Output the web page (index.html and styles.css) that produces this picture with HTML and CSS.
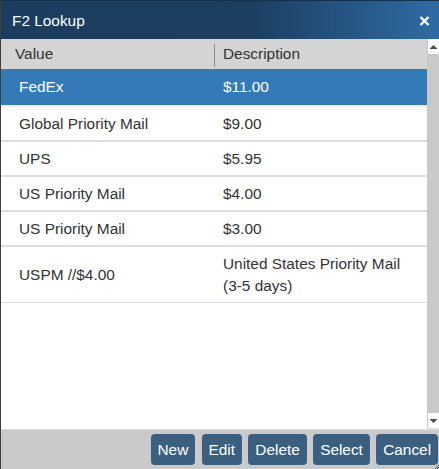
FILE: index.html
```html
<!DOCTYPE html>
<html>
<head>
<meta charset="utf-8">
<link rel="stylesheet" href="styles.css">
</head>
<body>
<div class="dialog">
  <div class="titlebar">
    <span class="title">F2 Lookup</span>
    <svg class="close" width="11" height="10" viewBox="0 0 11 10"><path d="M1.5 1 L9.5 9 M9.5 1 L1.5 9" stroke="#fff" stroke-width="2.4" stroke-linecap="butt"/></svg>
  </div>
  <div class="body">
    <div class="grid">
      <div class="head">
        <div class="hcell hval">Value</div>
        <div class="hsep"></div>
        <div class="hcell hdesc">Description</div>
      </div>
      <div class="row selected"><div class="cval">FedEx</div><div class="cdesc">$11.00</div></div>
      <div class="row"><div class="cval">Global Priority Mail</div><div class="cdesc">$9.00</div></div>
      <div class="row"><div class="cval">UPS</div><div class="cdesc">$5.95</div></div>
      <div class="row"><div class="cval">US Priority Mail</div><div class="cdesc">$4.00</div></div>
      <div class="row"><div class="cval">US Priority Mail</div><div class="cdesc">$3.00</div></div>
      <div class="row last"><div class="cval">USPM //$4.00</div><div class="cdesc">United States Priority Mail (3-5 days)</div></div>
    </div>
    <div class="scrollbar">
      <div class="sbtn"><svg width="9" height="6" viewBox="0 0 9 6"><path d="M0.5 5 L4.5 1 L8.5 5 Z" fill="#4a4a4a"/></svg></div>
      <div class="strack"></div>
      <div class="sbtn"><svg width="9" height="6" viewBox="0 0 9 6"><path d="M0.5 1 L4.5 5 L8.5 1 Z" fill="#4a4a4a"/></svg></div>
    </div>
  </div>
  <div class="footer">
    <button class="btn">New</button>
    <button class="btn">Edit</button>
    <button class="btn">Delete</button>
    <button class="btn">Select</button>
    <button class="btn">Cancel</button>
    <svg class="grip" width="5" height="5" viewBox="0 0 5 5"><path d="M5 1 L1 5 M5 3 L3 5" stroke="#555" stroke-width="1"/></svg>
  </div>
</div>
</body>
</html>
```

FILE: styles.css
```css
html, body {
  margin: 0;
  padding: 0;
  background: #ffffff;
}
body {
  font-family: "Liberation Sans", Arial, sans-serif;
  font-size: 15.4px;
  color: #333333;
}
.dialog {
  width: 438px;
  height: 469px;
  border-left: 1px solid #3d3d3d;
  display: flex;
  flex-direction: column;
  overflow: hidden;
  position: relative;
}
.titlebar {
  height: 38px;
  border-top: 1px solid #17304a;
  background: linear-gradient(90deg, #1b3e60 0%, #1c3f61 58%, #2f6ba4 100%);
  display: flex;
  align-items: center;
  justify-content: space-between;
  padding: 0 9px 0 11px;
  color: #ffffff;
}
.title {
  font-size: 15.4px;
  padding-top: 1px;
}
.close {
  display: block;
  margin-top: 1px;
}
.body {
  flex: 1;
  display: flex;
  min-height: 0;
}
.grid {
  flex: 1;
  display: flex;
  flex-direction: column;
  background: #ffffff;
}
.head {
  height: 30px;
  background: #d4d4d4;
  display: flex;
  align-items: center;
  color: #333333;
}
.hval {
  width: 199px;
  padding-left: 14px;
}
.hsep {
  width: 1px;
  height: 23px;
  background: #8a8a8a;
  margin-top: 2px;
}
.hdesc {
  padding-left: 8px;
}
.row {
  display: grid;
  grid-template-columns: 214px 1fr;
  align-items: center;
  min-height: 33px;
  border-bottom: 2px solid #dddddd;
  line-height: 22px;
}
.row.selected {
  background: #337ab7;
  color: #ffffff;
  min-height: 36px;
  border-bottom-color: #eeeeee;
}
.row.last {
  min-height: 55px;
  border-bottom: 1px solid #dddddd;
}
.cval {
  padding-left: 18px;
}
.cdesc {
  padding: 0 14px 0 8px;
}
.scrollbar {
  width: 12px;
  background: #c9c9c9;
  display: flex;
  flex-direction: column;
  border-bottom: 1px solid #dddddd;
}
.sbtn {
  height: 15px;
  margin-left: 1px;
  background: #ffffff;
  display: flex;
  align-items: center;
  justify-content: center;
}
.strack {
  flex: 1;
}
.footer {
  height: 40px;
  border-top: 1px solid #dddddd;
  background: #cacaca;
  display: flex;
  justify-content: flex-end;
  align-items: flex-start;
  gap: 6.5px;
  padding: 4px 1px 0 0;
  box-sizing: border-box;
  position: relative;
}
.btn {
  height: 31px;
  padding: 0 6.9px;
  border: none;
  border-radius: 4px;
  background: #3b5f80;
  color: #ffffff;
  font-family: "Liberation Sans", Arial, sans-serif;
  font-size: 15.4px;
  line-height: 31px;
}
.grip {
  position: absolute;
  right: 0;
  bottom: 0;
}
```
